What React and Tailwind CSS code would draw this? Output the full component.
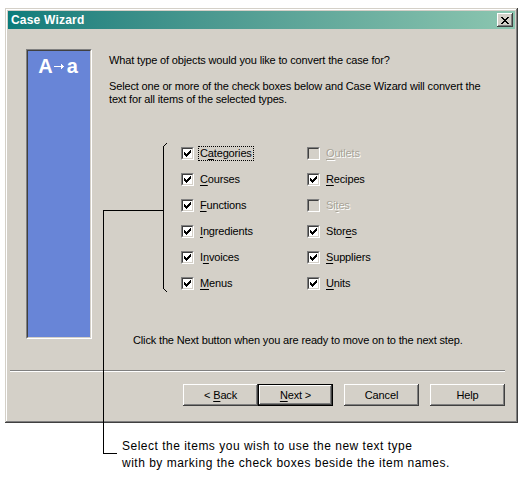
const LEFT_ITEMS = [
  { pre: 'C', key: 'a', post: 'tegories', checked: true, focused: true },
  { pre: '', key: 'C', post: 'ourses', checked: true },
  { pre: '', key: 'F', post: 'unctions', checked: true },
  { pre: '', key: 'I', post: 'ngredients', checked: true },
  { pre: 'I', key: 'n', post: 'voices', checked: true },
  { pre: '', key: 'M', post: 'enus', checked: true },
]

const RIGHT_ITEMS = [
  { pre: '', key: 'O', post: 'utlets', checked: false, disabled: true },
  { pre: '', key: 'R', post: 'ecipes', checked: true },
  { pre: 'Si', key: 't', post: 'es', checked: false, disabled: true },
  { pre: 'Stor', key: 'e', post: 's', checked: true },
  { pre: '', key: 'S', post: 'uppliers', checked: true },
  { pre: '', key: 'U', post: 'nits', checked: true },
]

function CheckBox({ item }) {
  return (
    <div className="flex items-center h-[26px]">
      <div className="w-[13px] h-[13px] border-t border-l border-[#808080] border-b-white border-r-white border-b border-r">
        <div
          className={`w-[11px] h-[11px] border-t border-l border-[#404040] border-b border-r border-b-[#d4d0c8] border-r-[#d4d0c8] flex items-center justify-center ${
            item.disabled ? 'bg-[#d4d0c8]' : 'bg-white'
          }`}
        >
          {item.checked && (
            <svg width="7" height="7" viewBox="0 0 7 7" shapeRendering="crispEdges">
              <path d="M6 0h1v3h-1zM5 1h1v3h-1zM4 2h1v3h-1zM0 2h1v3h-1zM1 3h1v3h-1zM2 4h1v3h-1zM3 3h1v3h-1z" fill="#000" />
            </svg>
          )}
        </div>
      </div>
      <span
        className={`ml-[5px] px-[1px] leading-[13px] ${
          item.focused ? 'outline outline-1 outline-dotted outline-black' : ''
        } ${item.disabled ? 'text-[#a8a498] [text-shadow:1px_1px_0_#ffffff]' : 'text-black'}`}
      >
        {item.pre}
        <span className="underline underline-offset-2">{item.key}</span>
        {item.post}
      </span>
    </div>
  )
}

function WinButton({ children, isDefault }) {
  return (
    <div
      className={`w-[75px] h-[22px] flex items-center justify-center bg-[#d4d0c8] ${
        isDefault
          ? 'border border-black shadow-[inset_-1px_-1px_#404040,inset_1px_1px_#ffffff,inset_-2px_-2px_#808080]'
          : 'shadow-[inset_-1px_-1px_#404040,inset_1px_1px_#ffffff,inset_-2px_-2px_#808080,inset_2px_2px_#d4d0c8]'
      }`}
    >
      {children}
    </div>
  )
}

export default function App() {
  return (
    <div
      className="relative w-[522px] h-[478px] bg-white text-[11px] text-black overflow-hidden"
      style={{ fontFamily: '"Liberation Sans", Arial, sans-serif' }}
    >
      <div className="pt-[8px] pl-[5px]">
        {/* Dialog window */}
        <div className="w-[513px] h-[415px] bg-[#d4d0c8] p-[3px] tracking-[-0.15px] shadow-[inset_-1px_-1px_#404040,inset_1px_1px_#d4d0c8,inset_-2px_-2px_#808080,inset_2px_2px_#ffffff] flex flex-col">
          {/* Title bar */}
          <div className="h-[18px] flex items-center justify-between bg-gradient-to-r from-[#0b7c7b] to-[#8cc6b0] pl-[3px] pr-[2px]">
            <span className="text-white font-bold text-[12px] tracking-[0.2px]">Case Wizard</span>
            <div className="w-[16px] h-[14px] bg-[#d4d0c8] flex items-center justify-center shadow-[inset_-1px_-1px_#404040,inset_1px_1px_#ffffff,inset_-2px_-2px_#808080]">
              <svg width="8" height="7" viewBox="0 0 8 7" shapeRendering="crispEdges">
                <path d="M0 0h2v1h-2zM6 0h2v1h-2zM1 1h2v1h-2zM5 1h2v1h-2zM2 2h4v1h-4zM3 3h2v1h-2zM2 4h4v1h-4zM1 5h2v1h-2zM5 5h2v1h-2zM0 6h2v1h-2zM6 6h2v1h-2z" fill="#000" />
              </svg>
            </div>
          </div>

          {/* Body */}
          <div className="flex pl-[18px] pt-[20px]">
            <div className="w-[66px] h-[290px] border-t border-l border-[#808080] border-b border-r border-b-white border-r-white">
              <div className="w-full h-full border-t border-l border-[#404040] border-b border-r border-b-[#d4d0c8] border-r-[#d4d0c8] bg-[#6885d7] flex justify-center pt-[6px] pr-[2px]">
                <div className="flex items-center text-white font-bold h-[18px] tracking-normal">
                  <span className="text-[20px] leading-[18px]">A</span>
                  <svg width="12" height="7" viewBox="0 0 12 7" className="mx-[1px] mt-[1px]" shapeRendering="crispEdges">
                    <path d="M0 3h9v1h-9zM7 1h1v5h-1zM8 2h1v3h-1zM9 3h1v1h-1z" fill="#fff" />
                  </svg>
                  <span className="text-[20px] leading-[18px]">a</span>
                </div>
              </div>
            </div>

            <div className="ml-[17px] pt-[5px] leading-[13px]">
              <p>What type of objects would you like to convert the case for?</p>
              <p className="mt-[13px]">
                Select one or more of the check boxes below and Case Wizard will convert the
                <br />
                text for all items of the selected types.
              </p>

              <div className="mt-[34px] ml-[72px] grid grid-cols-[126px_100px]">
                <div>
                  {LEFT_ITEMS.map((item) => (
                    <CheckBox key={item.key + item.post} item={item} />
                  ))}
                </div>
                <div>
                  {RIGHT_ITEMS.map((item) => (
                    <CheckBox key={item.key + item.post} item={item} />
                  ))}
                </div>
              </div>

              <p className="mt-[38px] ml-[24px]">Click the Next button when you are ready to move on to the next step.</p>
            </div>
          </div>

          {/* Separator */}
          <div className="mt-[23px] ml-[2px] mr-[10px] h-[2px] border-t border-[#808080] border-b border-b-white" />

          {/* Buttons */}
          <div className="mt-[12px] mr-[10px] flex justify-end">
            <WinButton>
              &lt; <span className="underline underline-offset-2 ml-[3px]">B</span>ack
            </WinButton>
            <WinButton isDefault>
              <span className="underline underline-offset-2">N</span>ext &gt;
            </WinButton>
            <div className="ml-[11px]">
              <WinButton>Cancel</WinButton>
            </div>
            <div className="ml-[11px]">
              <WinButton>Help</WinButton>
            </div>
          </div>
        </div>

        {/* Callout text */}
        <div className="mt-[15px] pl-[117px] text-[12px] leading-[17px] tracking-[0.5px]">
          <p>Select the items you wish to use the new text type</p>
          <p>with by marking the check boxes beside the item names.</p>
        </div>
      </div>

      {/* Annotation lines */}
      <svg className="absolute inset-0 pointer-events-none" width="522" height="478" shapeRendering="crispEdges">
        <path d="M163.5 146V289M103 210.5H163M103.5 210V453.5H117" stroke="#000" strokeWidth="1" fill="none" />
        <path d="M164 146L167 143M164 289L167 292" stroke="#000" strokeWidth="1" fill="none" shapeRendering="auto" />
      </svg>
    </div>
  )
}
